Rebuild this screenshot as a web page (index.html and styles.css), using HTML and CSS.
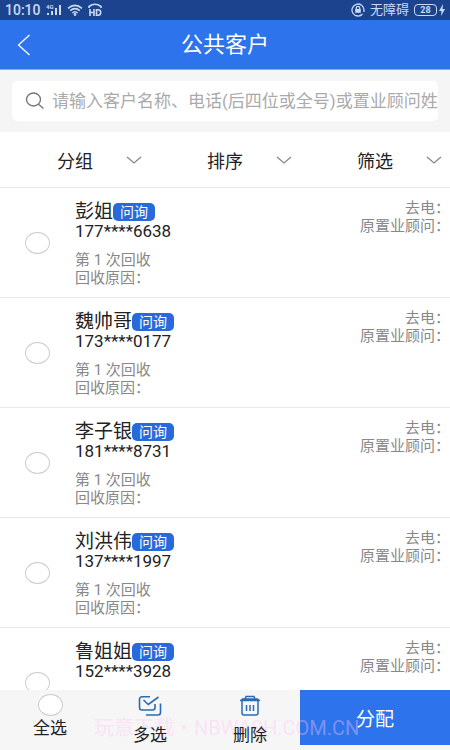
FILE: index.html
```html
<!DOCTYPE html>
<html lang="zh-CN">
<head>
<meta charset="utf-8">
<meta name="viewport" content="width=device-width, initial-scale=1">
<title>公共客户</title>
<link rel="stylesheet" href="styles.css">
</head>
<body>
<div class="app">
  <div class="status">
    <span class="status-group">
      <span class="time">10:10</span>
      <svg width="16" height="12" viewBox="0 0 16 12" fill="currentColor"><text x="0" y="5" font-size="6" font-weight="bold">4G</text><path d="M1 9h2v2H1zM5 7h2v4H5zM9 4h2v7H9zM13 1h2v10h-2z"/></svg>
      <svg width="16" height="12" viewBox="0 0 16 12" fill="none" stroke="currentColor" stroke-width="1.6"><path d="M1 4.300Q8-1.500 15 4.300M3.200 6.700Q8 2.500 12.800 6.700M5.400 9Q8 6.500 10.600 9"/><circle cx="8" cy="10.500" r=".6"/></svg>
      <svg width="14" height="14" viewBox="0 0 14 14" fill="none" stroke="currentColor" stroke-width="1.600"><path d="M1 5V3.500Q7-1 13 3.500V5M2 6v7M6 6v7M2 9.500h4M8.500 6.800v5.400h1.500q2.700 0 2.700-2.700T10 6.800z"/></svg>
    </span>
    <span class="status-group">
      <svg width="14" height="14" viewBox="0 0 14 14" fill="none" stroke="currentColor" stroke-width="1.300"><path d="M11.500 11A6 6 0 1 1 13 7v2"/><path d="M5.300 6V5a1.700 1.700 0 0 1 3.400 0v1"/><path d="M4.200 6h5.600v3.800H4.200z" fill="currentColor" stroke="none"/></svg>
      <span class="mode">无障碍</span>
      <span class="power"><span class="battery">28</span><svg width="6" height="12" viewBox="0 0 6 12" fill="currentColor"><path d="M4 0 0 7h2.500L2 12l4-7H3.500z"/></svg></span>
    </span>
  </div>

  <header class="header">
    <button class="back" aria-label="返回"><svg width="14" height="22" viewBox="0 0 14 22" fill="none" stroke="currentColor" stroke-width="1.300"><path d="M12.500 1 1.500 11l11 10"/></svg></button>
    <h1 class="title">公共客户</h1>
  </header>

  <div class="search-area">
    <label class="search">
      <svg width="20" height="18" viewBox="0 0 20 18" fill="none" stroke="currentColor" stroke-width="1.400"><ellipse cx="8.500" cy="7.500" rx="7" ry="6.500"/><path d="m13.500 12.300 5 4.200"/></svg>
      <input class="search-input" type="text" aria-label="搜索客户" placeholder="请输入客户名称、电话(后四位或全号)或置业顾问姓名">
    </label>
  </div>

  <nav class="filters">
    <button class="filter">分组<svg class="chevron" width="16" height="8" viewBox="0 0 16 8"><path d="m1 1 7 6 7-6"/></svg></button>
    <button class="filter">排序<svg class="chevron" width="16" height="8" viewBox="0 0 16 8"><path d="m1 1 7 6 7-6"/></svg></button>
    <button class="filter">筛选<svg class="chevron" width="16" height="8" viewBox="0 0 16 8"><path d="m1 1 7 6 7-6"/></svg></button>
  </nav>

  <main class="list">
    <article class="customer">
      <input class="pick" type="checkbox" aria-label="选择彭姐">
      <div class="info">
        <h2 class="name">彭姐<span class="tag">问询</span></h2>
        <p class="phone">177****6638</p>
        <p class="note">第 1 次回收<br>回收原因：</p>
      </div>
      <p class="owner">去电：<br>原置业顾问：</p>
    </article>
    <article class="customer">
      <input class="pick" type="checkbox" aria-label="选择魏帅哥">
      <div class="info">
        <h2 class="name">魏帅哥<span class="tag">问询</span></h2>
        <p class="phone">173****0177</p>
        <p class="note">第 1 次回收<br>回收原因：</p>
      </div>
      <p class="owner">去电：<br>原置业顾问：</p>
    </article>
    <article class="customer">
      <input class="pick" type="checkbox" aria-label="选择李子银">
      <div class="info">
        <h2 class="name">李子银<span class="tag">问询</span></h2>
        <p class="phone">181****8731</p>
        <p class="note">第 1 次回收<br>回收原因：</p>
      </div>
      <p class="owner">去电：<br>原置业顾问：</p>
    </article>
    <article class="customer">
      <input class="pick" type="checkbox" aria-label="选择刘洪伟">
      <div class="info">
        <h2 class="name">刘洪伟<span class="tag">问询</span></h2>
        <p class="phone">137****1997</p>
        <p class="note">第 1 次回收<br>回收原因：</p>
      </div>
      <p class="owner">去电：<br>原置业顾问：</p>
    </article>
    <article class="customer">
      <input class="pick" type="checkbox" aria-label="选择鲁姐姐">
      <div class="info">
        <h2 class="name">鲁姐姐<span class="tag">问询</span></h2>
        <p class="phone">152****3928</p>
      </div>
      <p class="owner">去电：<br>原置业顾问：</p>
    </article>
  </main>

  <footer class="actions">
    <label class="action action-all"><input class="pick" type="checkbox">全选</label>
    <button class="action"><svg width="24" height="22" viewBox="0 0 24 22" fill="none" stroke="currentColor" stroke-width="1.600"><path d="M12 1.800H4a2.500 2.500 0 0 0-2.500 2.500v8.200A2.500 2.500 0 0 0 4 15h10.500a2.500 2.500 0 0 0 2.500-2.500V9M5.500 5l4.800 4.500L20.500 2M22.500 8.500v9a2.500 2.500 0 0 1-2.500 2.500H8"/></svg>多选</button>
    <button class="action"><svg width="22" height="22" viewBox="0 0 22 22" fill="none" stroke="currentColor" stroke-width="1.500"><path d="M1 5.500h20M2 5.500 3.500 4h15L20 5.500M6 4l1-2.500h8L16 4M3 5.500V18a2 2 0 0 0 2 2h12a2 2 0 0 0 2-2V5.500M7.500 10v6M11 10v6M14.500 10v6"/></svg>删除</button>
    <button class="assign">分配</button>
    <span class="watermark">玩意下载・NBWASH.COM.CN</span>
  </footer>
</div>
</body>
</html>
```
FILE: styles.css
```css
* { box-sizing: border-box; }

body {
  margin: 0;
  background: #fff;
  color: #222;
  font-family: Roboto, "Noto Sans CJK SC", sans-serif;
}

h1, h2, p { margin: 0; font-weight: 400; }

button {
  padding: 0;
  border: 0;
  background: none;
  color: inherit;
  font: inherit;
}

svg { flex: none; }

.app {
  display: flex;
  flex-direction: column;
  height: 100vh;
  overflow: hidden;
}

.status {
  display: flex;
  flex: none;
  justify-content: space-between;
  height: 20px;
  padding: 0 5px;
  background: #1c448e;
  color: #c9daf7;
}

.status-group, .power { display: flex; align-items: center; }
.status-group { gap: 5px; }
.power { gap: 2px; }
.time { font-size: 14px; font-weight: 500; }
.mode { font-size: 13px; line-height: 20px; }

.battery {
  width: 23px;
  border: 1px solid currentColor;
  border-radius: 4px;
  font-size: 9px;
  font-weight: 700;
  line-height: 10px;
  text-align: center;
}

.header {
  display: grid;
  flex: none;
  grid-template-columns: 48px 1fr 48px;
  align-items: center;
  height: 50px;
  border-bottom: 1px solid #78b4ea;
  background: #2d73ec;
  color: #fff;
}

.back { display: flex; justify-content: center; }
.title { font-size: 22px; line-height: 30px; text-align: center; }

.search-area { flex: none; padding: 11px 12px; background: #f5f5f5; }

.search {
  display: flex;
  align-items: center;
  gap: 7px;
  height: 40px;
  padding-left: 13px;
  border-radius: 5px;
  background: #fff;
  color: #777;
}

.search-input {
  flex: 1;
  min-width: 0;
  padding: 0;
  border: 0;
  outline: 0;
  background: none;
  font: inherit;
  font-size: 17px;
}

.search-input::placeholder { color: #aaa; }

.filters {
  display: grid;
  flex: none;
  grid-template-columns: repeat(3, 1fr);
  height: 56px;
  border-bottom: 1px solid #e8e8e8;
}

.filter {
  display: flex;
  align-items: center;
  justify-content: flex-end;
  gap: 33px;
  padding-right: 8px;
  font-size: 18px;
}

.chevron { fill: none; stroke: #888; stroke-width: 1.3; }

.list { flex: 1; min-height: 0; overflow: hidden; }

.customer {
  display: grid;
  grid-template-columns: 50px 1fr auto;
  column-gap: 25px;
  height: 110px;
  padding-top: 11px;
  border-bottom: 1px solid #e8e8e8;
}

.pick {
  width: 25px;
  height: 22px;
  margin: 0;
  border: 1px solid #ccc;
  border-radius: 50%;
  background: #fff;
  appearance: none;
}

.customer .pick { justify-self: end; margin-top: 33px; }

.info { padding-top: 2px; }

.name {
  display: flex;
  align-items: center;
  font-size: 19px;
  line-height: 22px;
}

.tag {
  padding: 0 7px;
  border-radius: 5px;
  background: #2869dc;
  color: #fff;
  font-size: 14px;
  line-height: 18px;
}

.phone { font-size: 17px; line-height: 16px; }
.note, .owner { color: #888; font-size: 15px; line-height: 18px; }
.note { margin-top: 12px; }
.owner { text-align: right; }

.actions {
  position: relative;
  display: grid;
  flex: none;
  grid-template-columns: 2fr 2fr 2fr 3fr;
  height: 60px;
  background: #f6f6f6;
}

.action {
  display: flex;
  z-index: 1;
  flex-direction: column;
  align-items: center;
  justify-content: flex-start;
  gap: 6px;
  padding-top: 5px;
  color: #222;
  font-size: 17px;
  line-height: 24px;
}

.action svg { color: #2c6ab4; }
.action-all { gap: 0; padding-top: 4px; }

.assign {
  height: 55px;
  background: #2d73ec;
  color: #fff;
  font-size: 19px;
}

.watermark {
  position: absolute;
  top: 27px;
  left: 94px;
  color: #ffc4f466;
  font-size: 20px;
  line-height: 22px;
  pointer-events: none;
}
```
